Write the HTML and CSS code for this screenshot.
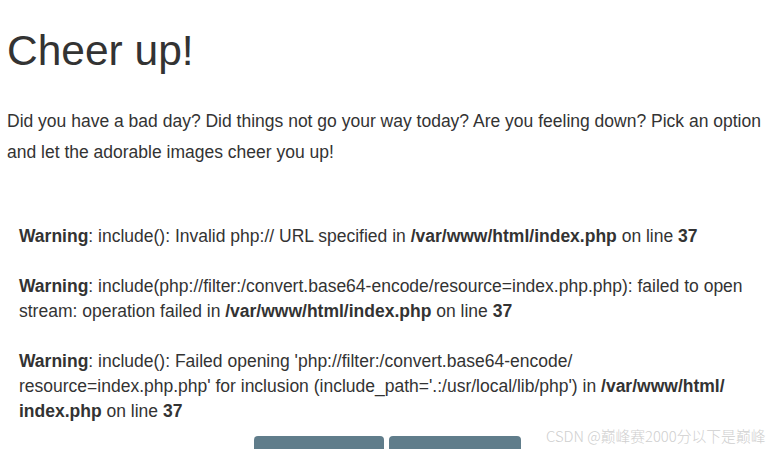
FILE: index.html
```html
<!DOCTYPE html>
<html>
<head>
<meta charset="utf-8">
<link rel="stylesheet" href="styles.css">
</head>
<body>
<div class="page">
  <h1 class="title">Cheer up!</h1>
  <p class="lead">Did you have a bad day? Did things not go your way today? Are you feeling down? Pick an option and let the adorable images cheer you up!</p>
  <div class="warnings">
    <br>
    <b>Warning</b>: include(): Invalid php:// URL specified in <b>/var/www/html/index.php</b> on line <b>37</b><br>
    <br>
    <b>Warning</b>: include(php://filter:/convert.base64-encode/resource=index.php.php): failed to open stream: operation failed in <b>/var/www/html/index.php</b> on line <b>37</b><br>
    <br>
    <b>Warning</b>: include(): Failed opening 'php://filter:/convert.base64-encode/<wbr>resource=index.php.php' for inclusion (include_path='.:/usr/local/lib/php') in <b>/var/www/html/<wbr>index.php</b> on line <b>37</b><br>
  </div>
  <div class="buttons">
    <button class="btn btn-a">woofers</button>
    <button class="btn btn-b">meowers</button>
  </div>
</div>
<div class="watermark">CSDN @巅峰赛2000分以下是巅峰</div>
</body>
</html>
```

FILE: styles.css
```css
html, body {
  margin: 0;
  padding: 0;
  background: #fff;
  overflow: hidden;
}
body {
  font-family: "Liberation Sans", Arial, sans-serif;
  color: #333;
  width: 775px;
  height: 449px;
  position: relative;
}
.page {
  padding: 0 13px 0 7px;
}
.title {
  font-size: 42.5px;
  font-weight: normal;
  line-height: 52px;
  margin: 25px 0 0 0;
}
.lead {
  font-size: 17.5px;
  line-height: 31px;
  margin: 29px 0 0 0;
}
.warnings {
  padding: 0 12px;
  font-size: 17.5px;
  line-height: 25px;
  margin-top: 31px;
}
.buttons {
  display: flex;
  justify-content: center;
  gap: 5px;
  margin-top: 12px;
  padding-left: 6px;
}
.btn {
  height: 40px;
  background: #607d8b;
  border: none;
  border-radius: 4px;
  color: #607d8b;
  font-size: 17px;
}
.btn-a {
  width: 130px;
}
.btn-b {
  width: 132px;
}
.watermark {
  position: absolute;
  left: 546px;
  top: 425px;
  font-family: "Noto Sans CJK SC", sans-serif;
  font-size: 14.8px;
  color: #cfcfcf;
  font-weight: 300;
}
```
